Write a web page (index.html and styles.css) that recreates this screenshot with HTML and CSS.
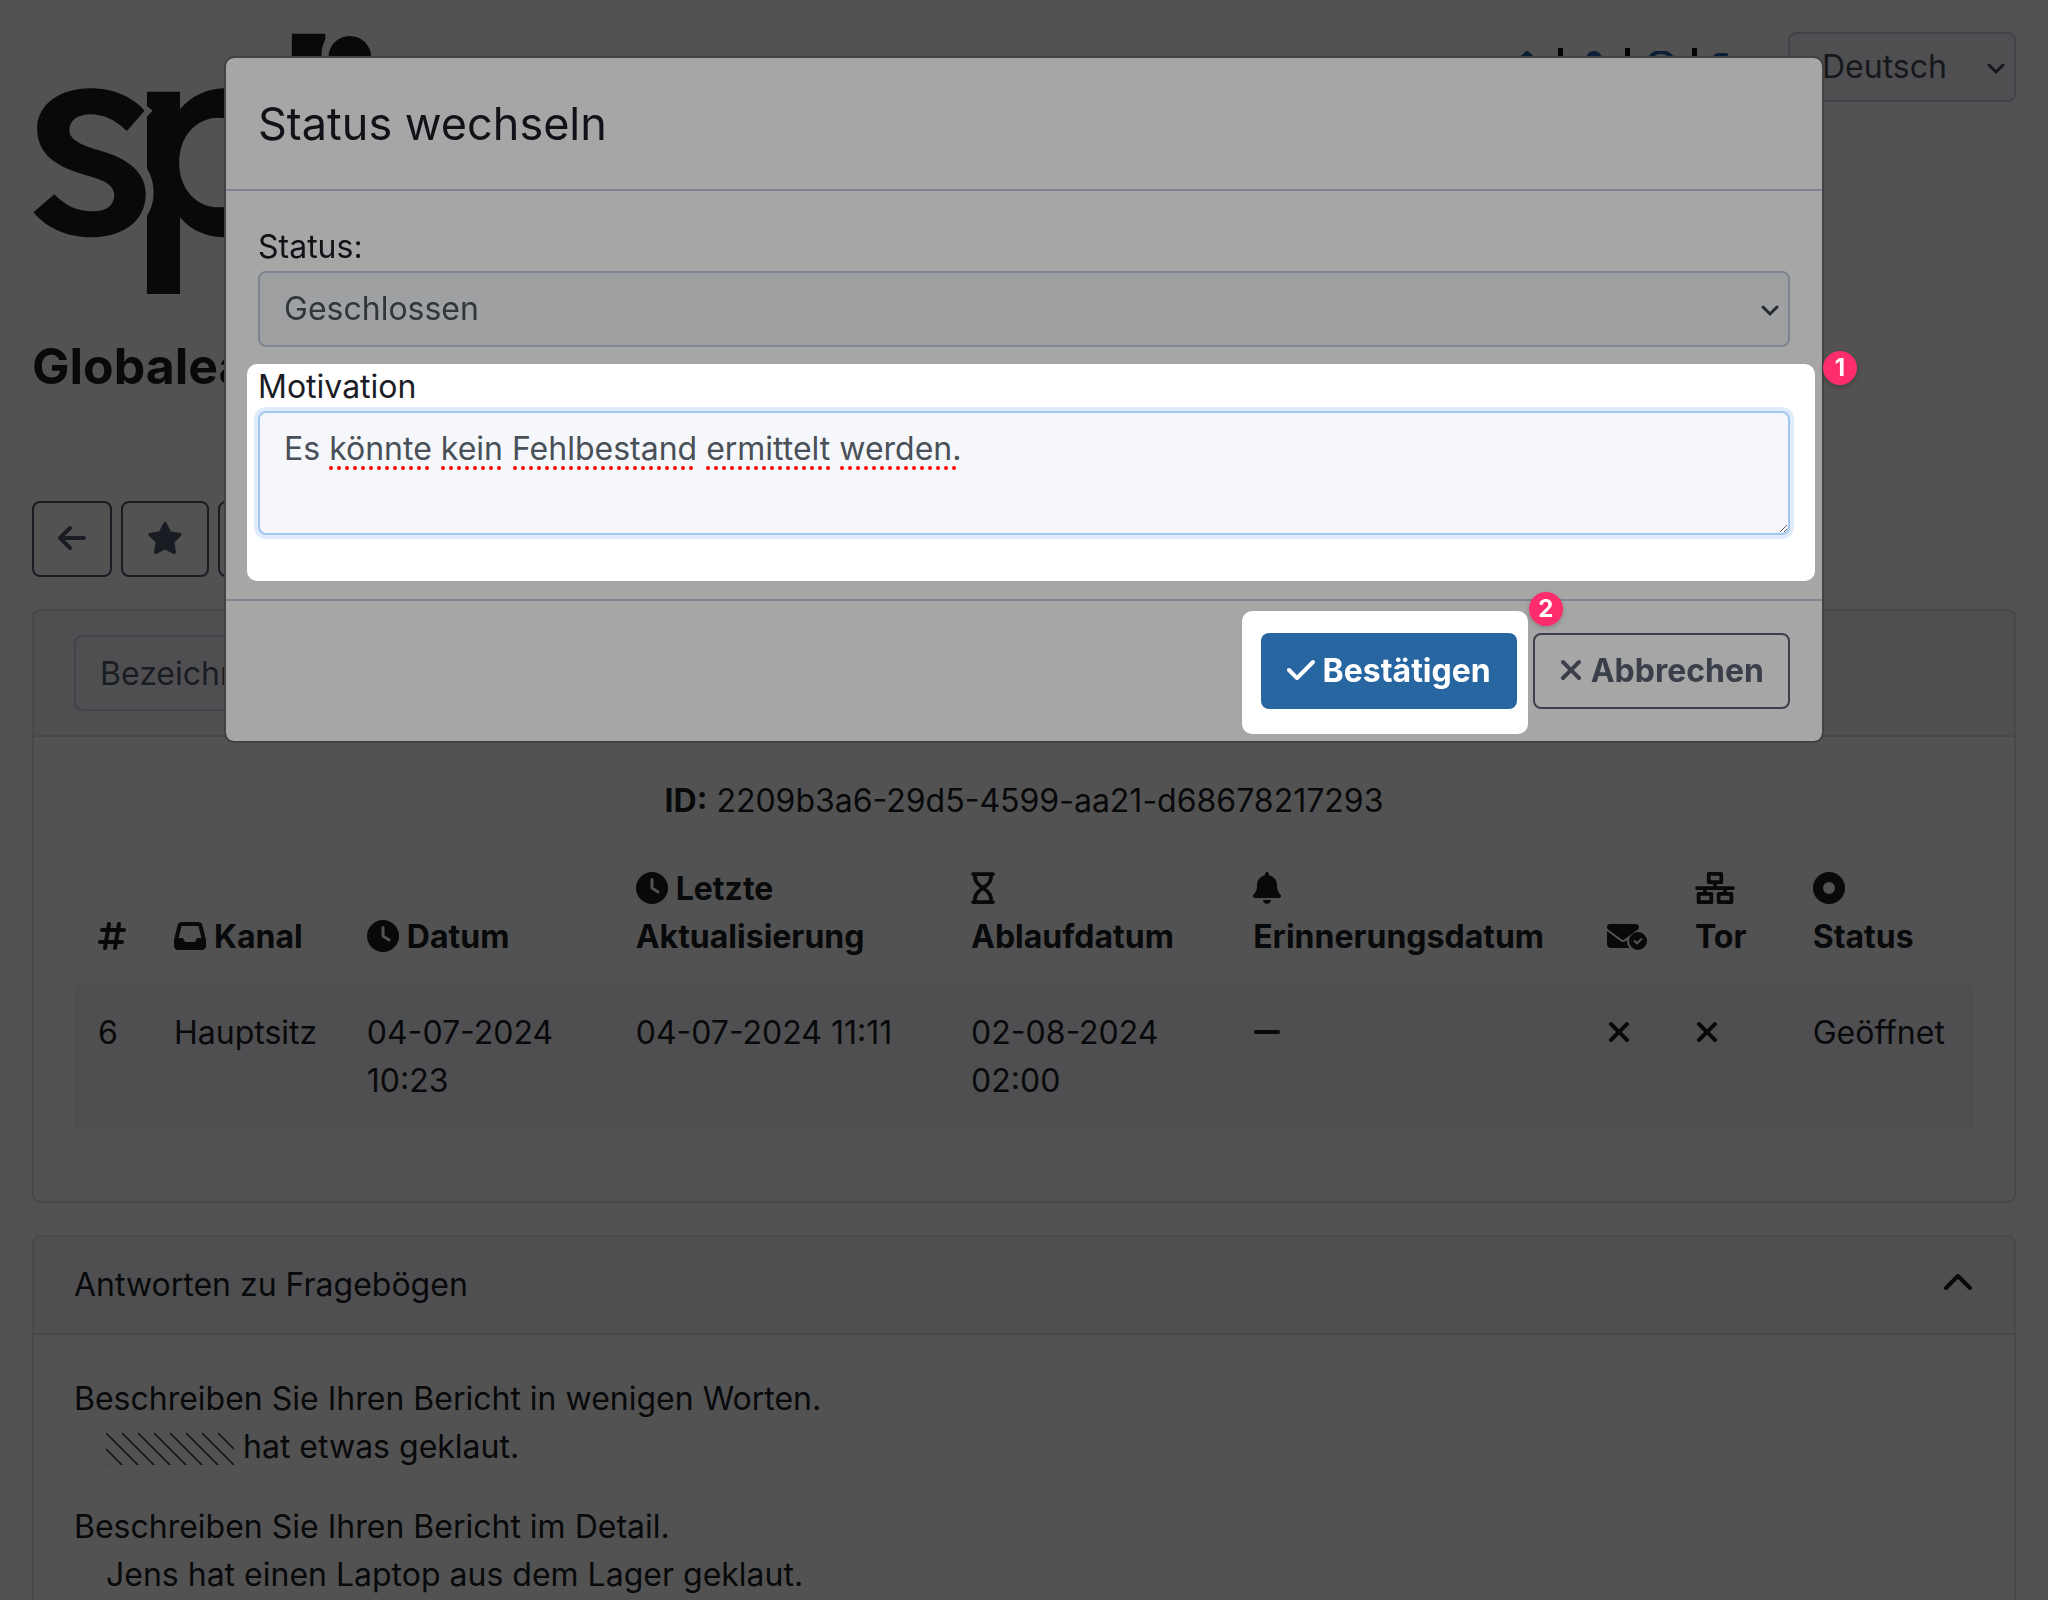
FILE: index.html
```html
<!DOCTYPE html>
<html lang="de">
<head>
<meta charset="utf-8">
<meta name="viewport" content="width=device-width, initial-scale=1">
<title>Status wechseln</title>
<link rel="stylesheet" href="styles.css">
</head>
<body>
<svg class="sprite" aria-hidden="true">
  <symbol id="clock" viewBox="0 0 512 512"><path d="M256 0a256 256 0 1 1 0 512A256 256 0 1 1 256 0zM232 120V256c0 8 4 15.5 10.7 20l96 64c11 7.4 25.9 4.4 33.3-6.7s4.4-25.9-6.7-33.3L280 243.2V120c0-13.3-10.7-24-24-24s-24 10.7-24 24z"/></symbol>
  <symbol id="xmark" viewBox="0 0 384 512"><path d="M342.6 150.6c12.5-12.5 12.5-32.8 0-45.3s-32.8-12.5-45.3 0L192 210.7 86.6 105.4c-12.5-12.5-32.8-12.5-45.3 0s-12.5 32.8 0 45.3L146.7 256 41.4 361.4c-12.5 12.5-12.5 32.8 0 45.3s32.8 12.5 45.3 0L192 301.3 297.4 406.6c12.5 12.5 32.8 12.5 45.3 0s12.5-32.8 0-45.3L237.3 256 342.6 150.6z"/></symbol>
</svg>

<div class="page">
  <header class="topbar">
    <svg class="logo" viewBox="78.4 96 882 792" preserveAspectRatio="none" role="img" aria-label="Logo">
      <path d="M354 332L311 393C280 357 250 343 222 343C190 343 170 362 170 390C170 415 190 432 240 450C305 472 357 510 357 582C357 660 305 712 222 712C165 712 115 685 82 637L133 583C160 618 190 634 228 634C262 634 280 615 280 585C280 560 262 542 215 527C140 503 91 465 91 385C91 315 145 265 222 265C275 265 325 290 354 332Z"/>
      <path fill-rule="evenodd" d="M360 275H441V328C470 285 510 265 555 265C640 265 700 355 700 488C700 620 640 712 555 712C510 712 470 695 441 652V882H360V648C382 605 382 550 360 505V350L374 332L360 318ZM535 353C480 353 439 410 439 488C439 565 480 622 535 622C590 622 620 565 620 488C620 410 590 353 535 353Z"/>
      <path d="M715 101H797V118C788 140 787 160 788 180H797V712H715Z"/>
      <ellipse cx="857" cy="170" rx="52" ry="62"/>
    </svg>
    <div class="topbar-tools">
      <nav class="quick-links" aria-label="Benutzer">
        <a href="#" aria-label="Startseite"><svg class="icon w36" viewBox="0 0 576 512"><path d="M262 11a40 40 0 0 1 52 0L576 256H510V512H350V340H226V512H66V256H0Z"/></svg></a>
        <span class="sep"></span>
        <a href="#" aria-label="Einstellungen"><svg class="icon w28" viewBox="0 0 448 512"><path d="M224 256a128 128 0 1 0 0-256 128 128 0 1 0 0 256zM178 304C80 304 0 384 0 482c0 17 13 30 30 30h388c17 0 30-13 30-30 0-98-80-178-178-178z"/></svg></a>
        <span class="sep"></span>
        <a href="#" aria-label="Aktualisieren"><svg class="icon w32" viewBox="0 0 512 512"><path d="M72 130A205 205 0 0 1 440 130M440 382A205 205 0 0 1 72 382M72 76V200H190M440 436V312H322M440 76V130" fill="none" stroke="currentColor" stroke-width="64"/></svg></a>
        <span class="sep"></span>
        <a href="#" aria-label="Abmelden"><svg class="icon w32" viewBox="0 0 512 512"><path d="M226 64H112A80 80 0 0 0 32 144V368A80 80 0 0 0 112 448H226M180 256H470M352 110L480 256L352 402" fill="none" stroke="currentColor" stroke-width="64" stroke-linecap="round"/></svg></a>
      </nav>
      <div class="select-wrap">
        <select class="language" aria-label="Sprache"><option>Deutsch</option></select>
        <svg class="caret" viewBox="0 0 18 12"><path d="M2 2L9 9L16 2"/></svg>
      </div>
    </div>
  </header>

  <h1>Globalea</h1>

  <div class="toolbar">
    <button type="button" class="btn btn-outline" aria-label="Zurück"><svg class="icon w28" viewBox="0 0 448 512"><path d="M9.4 233.4c-12.5 12.5-12.5 32.8 0 45.3l160 160c12.5 12.5 32.8 12.5 45.3 0s12.5-32.8 0-45.3L109.2 288 416 288c17.7 0 32-14.3 32-32s-14.3-32-32-32l-306.7 0L214.6 118.6c12.5-12.5 12.5-32.8 0-45.3s-32.8-12.5-45.3 0l-160 160z"/></svg></button>
    <button type="button" class="btn btn-outline" aria-label="Wichtig"><svg class="icon w36" viewBox="0 0 576 512"><path d="M316.9 18C311.6 7 300.4 0 288.1 0s-23.4 7-28.8 18L195 150.3 51.4 171.5c-12 1.8-22 10.2-25.7 21.7s-.7 24.2 7.9 32.7L137.8 329 113.2 474.7c-2 12 3 24.2 12.9 31.3s23 8 33.8 2.3l128.3-68.5 128.3 68.5c10.8 5.7 23.9 4.9 33.8-2.3s14.9-19.3 12.9-31.3L438.5 329 542.7 225.9c8.6-8.5 11.7-21.2 7.9-32.7s-13.7-19.9-25.7-21.7L381.2 150.3 316.9 18z"/></svg></button>
    <button type="button" class="btn btn-outline" aria-label="Status"><svg class="icon w32"><use href="#clock"/></svg></button>
  </div>

  <section class="card">
    <div class="card-header"><input class="text-input" type="text" placeholder="Bezeichnung" aria-label="Bezeichnung"></div>
    <div class="card-body">
      <p class="report-id"><b>ID:</b> 2209b3a6-29d5-4599-aa21-d68678217293</p>
      <table class="report">
        <colgroup><col class="c-num"><col class="c-channel"><col class="c-date"><col class="c-update"><col class="c-expiry"><col class="c-reminder"><col class="c-mail"><col class="c-tor"><col></colgroup>
        <thead>
          <tr>
            <th scope="col"><svg class="icon w28" viewBox="0 0 448 512"><path d="M181.3 32.4c17.4 2.9 29.2 19.4 26.3 36.8L197.8 128h95.1l11.5-69.3c2.9-17.4 19.4-29.2 36.8-26.3s29.2 19.4 26.3 36.8L357.8 128H416c17.7 0 32 14.3 32 32s-14.3 32-32 32H347.1L325.8 320H384c17.7 0 32 14.3 32 32s-14.3 32-32 32H315.1l-11.5 69.3c-2.9 17.4-19.4 29.2-36.8 26.3s-29.2-19.4-26.3-36.8l9.8-58.7H155.1l-11.5 69.3c-2.9 17.4-19.4 29.2-36.8 26.3s-29.2-19.4-26.3-36.8L90.2 384H32c-17.7 0-32-14.3-32-32s14.3-32 32-32h68.9l21.3-128H64c-17.7 0-32-14.3-32-32s14.3-32 32-32h68.9l11.5-69.3c2.9-17.4 19.4-29.2 36.8-26.3zM187.1 192L165.8 320h95.1l21.3-128H187.1z"/></svg></th>
            <th scope="col"><svg class="icon w32 lead" viewBox="0 0 512 512"><path d="M121 32C91.6 32 66 52 58.9 80.5L1.9 308.4C.6 313.5 0 318.7 0 323.9V416c0 35.3 28.7 64 64 64H448c35.3 0 64-28.7 64-64V323.9c0-5.2-.6-10.4-1.9-15.5l-57-227.9C446 52 420.4 32 391 32H121zm0 64H391l48 192H387.8c-12.1 0-23.2 6.8-28.6 17.7l-14.3 28.6c-5.4 10.8-16.5 17.7-28.6 17.7H195.8c-12.1 0-23.2-6.8-28.6-17.7l-14.3-28.6c-5.4-10.8-16.5-17.7-28.6-17.7H73L121 96z"/></svg>Kanal</th>
            <th scope="col"><svg class="icon w32 lead"><use href="#clock"/></svg>Datum</th>
            <th scope="col"><svg class="icon w32 lead"><use href="#clock"/></svg>Letzte Aktualisierung</th>
            <th scope="col"><svg class="icon w24" viewBox="0 0 384 512"><path d="M32 32H352M32 480H352M64 32V75C64 117 81 158 111 188L192 268L273 188C303 158 320 117 320 75V32M64 480V437C64 395 81 354 111 324L192 244L273 324C303 354 320 395 320 437V480" fill="none" stroke="currentColor" stroke-width="60" stroke-linecap="round" stroke-linejoin="round"/></svg><br>Ablaufdatum</th>
            <th scope="col"><svg class="icon w28" viewBox="0 0 448 512"><path d="M224 0c-17.7 0-32 14.3-32 32V51.2C119 66 64 130.6 64 208v18.8c0 47-17.3 92.4-48.5 127.6l-7.4 8.3c-8.4 9.4-10.4 22.9-5.3 34.4S19.4 416 32 416H416c12.6 0 24-7.4 29.2-18.9s3.1-25-5.3-34.4l-7.4-8.3C401.3 319.2 384 273.9 384 226.8V208c0-77.4-55-142-128-156.8V32c0-17.7-14.3-32-32-32zm45.3 493.3c12-12 18.7-28.3 18.7-45.3H224 160c0 17 6.7 33.3 18.7 45.3s28.3 18.7 45.3 18.7s33.3-6.7 45.3-18.7z"/></svg><br>Erinnerungsdatum</th>
            <th scope="col"><svg class="icon w40" viewBox="0 0 640 512"><path d="M48 64C21.500 64 0 85.500 0 112c0 15.100 7.100 29.300 19.200 38.400L236.800 313.600c11.400 8.500 27 8.500 38.400 0L492.800 150.400C504.900 141.300 512 127.100 512 112c0-26.500-21.500-48-48-48H48zM294.400 339.200c-22.800 17.100-54 17.100-76.800 0L0 176V384c0 35.300 28.700 64 64 64H360.200C335.100 417.600 320 378.500 320 336c0-5.600 .3-11.100 .8-16.600l-26.400 19.800zM640 336a144 144 0 1 0-288 0 144 144 0 1 0 288 0zm-76.700-43.300c6.200 6.200 6.200 16.400 0 22.600l-72 72c-6.200 6.200-16.400 6.200-22.600 0l-40-40c-6.200-6.200-6.200-16.400 0-22.600s16.400-6.200 22.600 0L480 353.400l60.700-60.700c6.200-6.200 16.400-6.200 22.600 0z"/></svg></th>
            <th scope="col"><svg class="icon w40" viewBox="0 0 640 512"><path d="M220 30H420V162H220ZM58 350H262V482H58ZM378 350H582V482H378ZM320 162V256M32 256H608M160 256V350M480 256V350" fill="none" stroke="currentColor" stroke-width="60" stroke-linecap="round" stroke-linejoin="round"/></svg><br>Tor</th>
            <th scope="col"><svg class="icon w32" viewBox="0 0 512 512"><circle cx="256" cy="256" r="176" fill="none" stroke="currentColor" stroke-width="160"/></svg><br>Status</th>
          </tr>
        </thead>
        <tbody>
          <tr>
            <td>6</td><td>Hauptsitz</td><td>04-07-2024 10:23</td><td>04-07-2024 11:11</td><td>02-08-2024 02:00</td>
            <td><svg class="icon w28" viewBox="0 0 448 512"><path d="M48 256H400" fill="none" stroke="currentColor" stroke-width="64" stroke-linecap="round"/></svg></td>
            <td><svg class="icon w24"><use href="#xmark"/></svg></td>
            <td><svg class="icon w24"><use href="#xmark"/></svg></td>
            <td>Geöffnet</td>
          </tr>
        </tbody>
      </table>
    </div>
  </section>

  <section class="card">
    <div class="card-header">
      <span>Antworten zu Fragebögen</span>
      <svg class="chevron" viewBox="0 0 32 20"><path d="M4 16L16 4L28 16"/></svg>
    </div>
    <div class="card-body">
      <dl class="answers">
        <dt>Beschreiben Sie Ihren Bericht in wenigen Worten.</dt>
        <dd><svg class="hatch" viewBox="0 0 128 32"><path d="M-32 0l34 34M-16 0l34 34M0 0l34 34M16 0l34 34M32 0l34 34M48 0l34 34M64 0l34 34M80 0l34 34M96 0l34 34M112 0l34 34"/></svg>hat etwas geklaut.</dd>
        <dt>Beschreiben Sie Ihren Bericht im Detail.</dt>
        <dd>Jens hat einen Laptop aus dem Lager geklaut.</dd>
      </dl>
    </div>
  </section>
</div>

<div class="modal-layer">
  <form class="modal" role="dialog" aria-labelledby="modal-title">
    <div class="modal-header"><h2 id="modal-title">Status wechseln</h2></div>
    <div class="modal-body">
      <label for="status">Status:</label>
      <div class="select-wrap">
        <select id="status" class="status"><option>Geschlossen</option></select>
        <svg class="caret" viewBox="0 0 18 12"><path d="M2 2L9 9L16 2"/></svg>
      </div>
      <div class="field spotlight">
        <label for="motivation">Motivation</label>
        <div class="area-wrap">
          <textarea id="motivation" spellcheck="false">Es könnte kein Fehlbestand ermittelt werden.</textarea>
          <svg class="spelling" viewBox="0 0 700 6"><path d="M47 3H147M159 3H221M231 3H411M424 3H549M558 3H671"/></svg>
        </div>
        <span class="badge">1</span>
      </div>
    </div>
    <div class="modal-footer">
      <div class="confirm spotlight">
        <button type="button" class="btn btn-primary"><svg class="icon w28 lead" viewBox="0 0 448 512"><path d="M438.6 105.4c12.5 12.5 12.5 32.8 0 45.3l-256 256c-12.5 12.5-32.8 12.5-45.3 0l-128-128c-12.5-12.5-12.5-32.8 0-45.3s32.8-12.5 45.3 0L160 338.7 393.4 105.4c12.5-12.5 32.8-12.5 45.3 0z"/></svg>Bestätigen</button>
        <span class="badge">2</span>
      </div>
      <button type="button" class="btn btn-outline"><svg class="icon w24 lead"><use href="#xmark"/></svg>Abbrechen</button>
    </div>
  </form>
</div>
</body>
</html>
```
FILE: styles.css
```css
:root {
  --page: #525252;
  --panel: #4f4f51;
  --ink: #08090b;
  --line: #484848;
}

* { box-sizing: border-box; }

body {
  margin: 0;
  background: var(--page);
  color: var(--ink);
  font: 400 32px/48px Inter, sans-serif;
}

h1, h2, p, dl, dd { margin: 0; }

button, input, select, textarea { font: inherit; }

.sprite { position: absolute; width: 0; height: 0; }

.icon { height: 32px; vertical-align: -4px; fill: currentColor; }
.w24 { width: 24px; }
.w28 { width: 28px; }
.w32 { width: 32px; }
.w36 { width: 36px; }
.w40 { width: 40px; }
.lead { margin-right: 8px; }

.page {
  height: 100vh;
  padding: 32px;
  overflow: hidden;
}

.topbar {
  display: flex;
  justify-content: space-between;
  align-items: flex-start;
}
.logo { width: 360px; height: 264px; fill: #090909; }
.topbar-tools { display: flex; align-items: center; gap: 42px; }

.quick-links { display: flex; align-items: center; gap: 13px; }
.quick-links a {
  display: flex;
  justify-content: center;
  width: 36px;
  color: #0b1f36;
}
.sep { width: 5px; height: 38px; background: #040404; }

.select-wrap { position: relative; }
select {
  display: block;
  appearance: none;
  border: 2px solid;
  border-radius: 8px;
  padding: 0 24px;
}
.caret {
  position: absolute;
  right: 11px;
  top: 50%;
  width: 18px;
  height: 12px;
  margin-top: -4px;
  fill: none;
  stroke: #26292f;
  stroke-width: 3;
  stroke-linecap: round;
}
.topbar .caret { stroke: #16181c; }
.language {
  width: 228px;
  height: 70px;
  padding: 0 32px;
  border-color: #404349;
  background: #4f4e50;
  color: #16181c;
}

h1 {
  margin: 40px 0 104px;
  font-size: 50px;
  font-weight: 700;
  line-height: 61px;
}

.toolbar { display: flex; gap: 9px; margin-bottom: 32px; }

.btn {
  height: 76px;
  padding: 0 24px;
  border: 2px solid transparent;
  border-radius: 8px;
  font-weight: 700;
  white-space: nowrap;
}
.btn-outline { background: none; border-color: #191d23; color: #191d23; }

.card {
  margin-bottom: 32px;
  border: 2px solid var(--line);
  border-radius: 8px;
}
.card-header {
  display: flex;
  justify-content: space-between;
  align-items: center;
  padding: 24px 40px;
  border-bottom: 2px solid var(--line);
  border-radius: 6px 6px 0 0;
  background: var(--panel);
}
.card-body { padding: 40px; }

.text-input {
  width: 480px;
  height: 76px;
  padding: 0 24px;
  border: 2px solid #404349;
  border-radius: 8px;
  background: var(--panel);
  color: #191d23;
}
.text-input::placeholder { color: #191d23; opacity: 1; }

.chevron {
  width: 32px;
  height: 20px;
  margin-bottom: 6px;
  fill: none;
  stroke: var(--ink);
  stroke-width: 4;
  stroke-linecap: round;
  stroke-linejoin: round;
}

.report-id { margin-bottom: 16px; text-align: center; }

.report {
  width: 100%;
  margin-bottom: 32px;
  border-collapse: collapse;
  table-layout: fixed;
}
.report th, .report td { padding: 24px; text-align: left; }
.report th { vertical-align: bottom; font-weight: 700; white-space: nowrap; }
.report th:nth-child(4) { white-space: normal; }
.report td { vertical-align: top; }
.report td:last-child { white-space: nowrap; }
.report tbody { background: var(--panel); }
.c-num { width: 4%; }
.c-channel { width: 10.150%; }
.c-date { width: 14.150%; }
.c-update { width: 17.650%; }
.c-expiry { width: 14.850%; }
.c-reminder { width: 18.600%; }
.c-mail { width: 4.650%; }
.c-tor { width: 6.200%; }

.answers dd { margin: 0 0 32px 32px; }
.hatch {
  width: 128px;
  height: 32px;
  margin-right: 9px;
  vertical-align: -7px;
  fill: none;
  stroke: #101010;
  stroke-width: 1.500;
}

.modal-layer {
  position: fixed;
  inset: 0;
  padding: 56px 32px;
}
.modal {
  max-width: 1600px;
  margin: 0 auto;
  border: 2px solid #424242;
  border-radius: 10px;
  background: #a6a6a6;
  background-clip: padding-box;
  color: #111217;
}
.modal-header { padding: 32px; border-bottom: 2px solid #7e8491; }
.modal-header h2 {
  font-size: 45px;
  font-weight: 400;
  line-height: 67px;
}
.modal-body { padding: 32px; }
.modal-body label { display: block; }

.status {
  width: 100%;
  height: 76px;
  border-color: #7e8491;
  background: #9fa0a2;
  color: #31353c;
}

.spotlight { position: relative; z-index: 0; }
.spotlight::before {
  content: "";
  position: absolute;
  z-index: -1;
  border-radius: 10px;
  background: #fff;
}

.field { margin: 16px 0 32px; color: #1b1c24; }
.field::before { inset: 1px -25px -46px -11px; }

.area-wrap { position: relative; }
textarea {
  display: block;
  width: 100%;
  height: 124px;
  padding: 12px 24px;
  border: 2px solid #a2c6f0;
  border-radius: 8px;
  outline: 0;
  background: #f5f7fb;
  box-shadow: 0 0 0 4px #dfecfc;
  color: #495057;
  resize: vertical;
}
.spelling {
  position: absolute;
  left: 26px;
  top: 54px;
  width: 700px;
  height: 6px;
  fill: none;
  stroke: #f00;
  stroke-width: 4;
  stroke-linecap: round;
  stroke-dasharray: 0 8;
  pointer-events: none;
}

.badge {
  position: absolute;
  width: 34px;
  height: 34px;
  border-radius: 50%;
  background: #ff2d6b;
  box-shadow: 0 2px 5px rgba(0, 0, 0, 0.2);
  color: #fff;
  font-size: 24px;
  font-weight: 700;
  line-height: 34px;
  text-align: center;
}
.field .badge { right: -67px; top: -12px; }
.confirm .badge { right: -46px; top: -41px; }

.modal-footer {
  display: flex;
  justify-content: flex-end;
  gap: 16px;
  padding: 32px;
  border-top: 2px solid #7e8491;
}
.modal .btn-outline { border-color: #3a3f4a; color: #3a3f4a; }
.confirm::before { inset: -22px -11px -25px -19px; }
.btn-primary { background: #2866a2; color: #fff; }
```
